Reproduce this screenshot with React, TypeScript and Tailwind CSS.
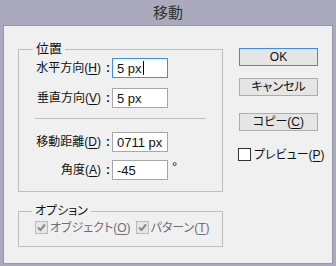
const font = { fontFamily: '"Liberation Sans", "Noto Sans CJK JP", sans-serif' };

function Acc({ label, k }: { label: string; k: string }) {
  return (
    <>
      {label}(<span className="underline underline-offset-2">{k}</span>)
    </>
  );
}

function Row({
  label,
  k,
  value,
  focused,
  suffix,
}: {
  label: string;
  k: string;
  value: string;
  focused?: boolean;
  suffix?: string;
}) {
  return (
    <div className="flex h-[20px] items-center">
      <div className="flex w-[66px] justify-end whitespace-nowrap text-[12px] leading-none text-[#111]">
        <Acc label={label} k={k} />
      </div>
      <span className="ml-[5px] w-[5px] text-[12px] font-bold leading-none text-[#111]">:</span>
      <div
        className={
          "ml-[1px] flex h-[20px] w-[56px] items-center border bg-white pl-[4px] text-[13px] leading-none text-[#111] " +
          (focused ? "border-[#3d8fe6]" : "border-[#a7a7a7]")
        }
      >
        {value}
        {focused && <span className="ml-[1px] h-[14px] w-px bg-black" />}
      </div>
      {suffix && <span className="ml-[4px] -mt-[8px] text-[13px] leading-none text-[#111]">{suffix}</span>}
    </div>
  );
}

function Button({ children, primary }: { children: React.ReactNode; primary?: boolean }) {
  return (
    <div
      className={
        "flex h-[18px] w-[79px] items-center justify-center border bg-[#e5e5e5] text-[12px] leading-none text-[#111] " +
        (primary ? "border-[#3c8ce6]" : "border-[#adadad]")
      }
    >
      {children}
    </div>
  );
}

function DisabledCheck({ children }: { children: React.ReactNode }) {
  return (
    <div className="flex items-center">
      <div className="flex h-[13px] w-[13px] items-center justify-center border border-[#bcbcbc] bg-[#e6e6e6]">
        <svg width="9" height="9" viewBox="0 0 9 9">
          <path d="M1 4.5 L3.5 7 L8 1.5" fill="none" stroke="#8a8a8a" strokeWidth="2" />
        </svg>
      </div>
      <span className="ml-[2px] whitespace-nowrap text-[12px] leading-none text-[#6e6e6e]">{children}</span>
    </div>
  );
}

export default function App() {
  return (
    <div
      className="flex h-[266px] w-[336px] flex-col bg-[#aba9bd] [font-feature-settings:'palt']"
      style={font}
    >
      <div className="flex h-[25px] items-center justify-center text-[15px] leading-none text-[#333]">
        移動
      </div>
      <div className="mx-[3px] flex h-[239px] border border-[#9896aa] bg-[#f0f0f0]">
        <div className="flex w-[219px] shrink-0 flex-col pl-[14px] pt-[15px]">
          <fieldset className="h-[151px] w-[205px] min-w-0 overflow-hidden border border-[#bfbfbf] pl-[16px] pr-[15px]">
            <legend className="ml-[-2px] px-[3px] text-[13px] leading-[16px] text-[#111]">位置</legend>
            <div className="mt-[1px] flex flex-col">
              <Row label="水平方向" k="H" value="5 px" focused />
              <div className="h-[10px]" />
              <Row label="垂直方向" k="V" value="5 px" />
              <div className="mt-[10px] h-px w-[171px] bg-[#bfbfbf]" />
              <div className="h-[13px]" />
              <Row label="移動距離" k="D" value="0711 px" />
              <div className="h-[8px]" />
              <Row label="角度" k="A" value="-45" suffix="°" />
            </div>
          </fieldset>
          <fieldset className="mt-[11px] h-[44px] w-[205px] min-w-0 overflow-hidden border border-[#bfbfbf] pl-[16px]">
            <legend className="ml-[-3px] px-[3px] text-[12px] leading-[16px] text-[#111]">オプション</legend>
            <div className="mt-[2px] flex items-center gap-[5px]">
              <DisabledCheck>
                <Acc label="オブジェクト" k="O" />
              </DisabledCheck>
              <DisabledCheck>
                <Acc label="パターン" k="T" />
              </DisabledCheck>
            </div>
          </fieldset>
        </div>
        <div className="ml-[16px] flex flex-col pt-[22px]">
          <Button primary>OK</Button>
          <div className="h-[12px]" />
          <Button>キャンセル</Button>
          <div className="h-[17px]" />
          <Button>
            <Acc label="コピー" k="C" />
          </Button>
          <div className="mt-[17px] flex items-center">
            <div className="-ml-px h-[13px] w-[13px] border border-[#333] bg-white" />
            <span className="ml-[3px] whitespace-nowrap text-[12px] leading-none text-[#111]">
              <Acc label="プレビュー" k="P" />
            </span>
          </div>
        </div>
      </div>
    </div>
  );
}
